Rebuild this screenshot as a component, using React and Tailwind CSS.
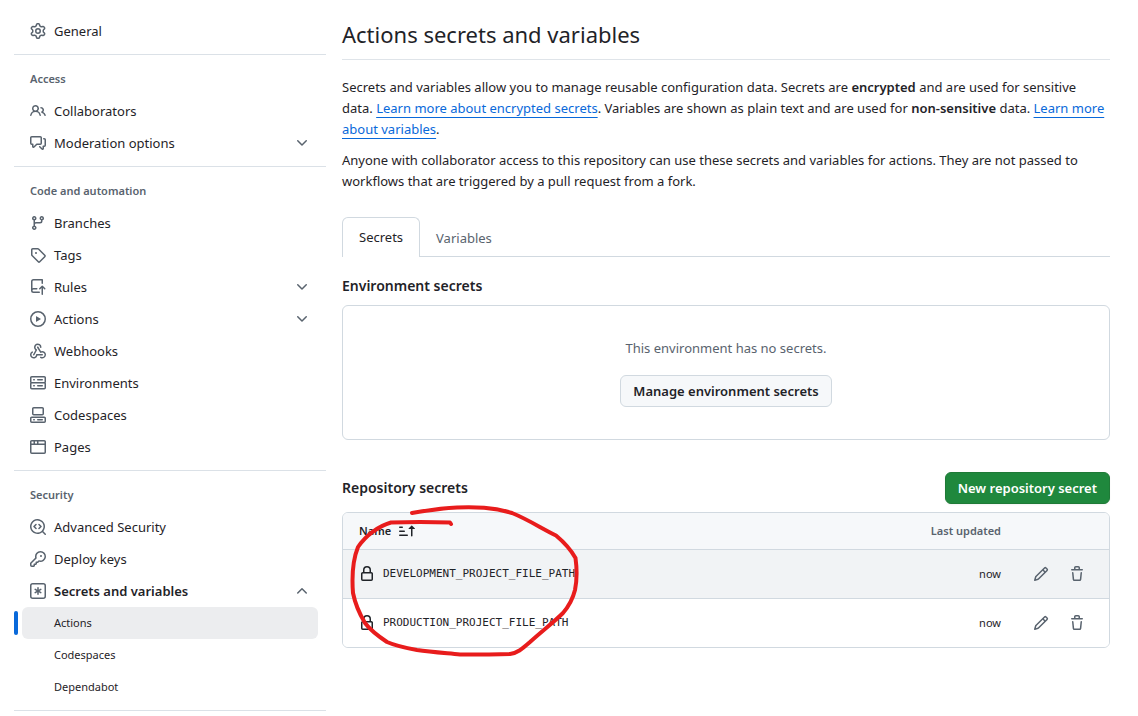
const ICONS = {
  gear: "M8 0a8.2 8.2 0 0 1 .701.031C9.444.095 9.99.645 10.16 1.29l.288 1.107c.018.066.079.158.212.224.231.114.454.243.668.386.123.082.233.09.299.071l1.103-.303c.644-.176 1.392.021 1.82.63.27.385.506.792.704 1.218.315.675.111 1.422-.364 1.891l-.814.806c-.049.048-.098.147-.088.294.016.257.016.515 0 .772-.01.147.038.246.088.294l.814.806c.475.469.679 1.216.364 1.891a7.977 7.977 0 0 1-.704 1.217c-.428.61-1.176.807-1.82.63l-1.102-.302c-.067-.019-.177-.011-.3.071a5.909 5.909 0 0 1-.668.386c-.133.066-.194.158-.211.224l-.29 1.106c-.168.646-.715 1.196-1.458 1.26a8.006 8.006 0 0 1-1.402 0c-.743-.064-1.289-.614-1.458-1.26l-.289-1.106c-.018-.066-.079-.158-.212-.224a5.738 5.738 0 0 1-.668-.386c-.123-.082-.233-.09-.299-.071l-1.103.303c-.644.176-1.392-.021-1.82-.63a8.12 8.12 0 0 1-.704-1.218c-.315-.675-.111-1.422.363-1.891l.815-.806c.05-.048.098-.147.088-.294a6.214 6.214 0 0 1 0-.772c.01-.147-.038-.246-.088-.294l-.815-.806C.635 6.045.431 5.298.746 4.623a7.92 7.92 0 0 1 .704-1.217c.428-.61 1.176-.807 1.82-.63l1.102.302c.067.019.177.011.3-.071.214-.143.437-.272.668-.386.133-.066.194-.158.211-.224l.29-1.106C6.009.645 6.556.095 7.299.03 7.53.01 7.764 0 8 0Zm-.571 1.525c-.036.003-.108.036-.137.146l-.289 1.105c-.147.561-.549.967-.998 1.189-.173.086-.34.183-.5.29-.417.278-.97.423-1.529.27l-1.103-.303c-.109-.03-.175.016-.195.045-.22.312-.412.644-.573.99-.014.031-.021.11.059.19l.815.806c.411.406.562.957.53 1.456a4.709 4.709 0 0 0 0 .582c.032.499-.119 1.05-.53 1.456l-.815.806c-.081.08-.073.159-.059.19.162.346.353.677.573.989.02.03.085.076.195.046l1.102-.303c.56-.153 1.113-.008 1.53.27.161.107.328.204.501.29.447.222.85.629.997 1.189l.289 1.105c.029.109.101.143.137.146a6.6 6.6 0 0 0 1.142 0c.036-.003.108-.036.137-.146l.289-1.105c.147-.561.549-.967.998-1.189.173-.086.34-.183.5-.29.417-.278.97-.423 1.529-.27l1.103.303c.109.029.175-.016.195-.045.22-.313.411-.644.573-.99.014-.031.021-.11-.059-.19l-.815-.806c-.411-.406-.562-.957-.53-1.456a4.709 4.709 0 0 0 0-.582c-.032-.499.119-1.05.53-1.456l.815-.806c.081-.08.073-.159.059-.19a6.464 6.464 0 0 0-.573-.989c-.02-.03-.085-.076-.195-.046l-1.102.303c-.56.153-1.113.008-1.53-.27a4.44 4.44 0 0 0-.501-.29c-.447-.222-.85-.629-.997-1.189l-.289-1.105c-.029-.11-.101-.143-.137-.146a6.6 6.6 0 0 0-1.142 0ZM11 8a3 3 0 1 1-6 0 3 3 0 0 1 6 0ZM9.5 8a1.5 1.5 0 1 0-3.001.001A1.5 1.5 0 0 0 9.5 8Z",
  people: "M2 5.5a3.5 3.5 0 1 1 5.898 2.549 5.508 5.508 0 0 1 3.034 4.084.75.75 0 1 1-1.482.235 4 4 0 0 0-7.9 0 .75.75 0 0 1-1.482-.236A5.507 5.507 0 0 1 3.102 8.05 3.493 3.493 0 0 1 2 5.5ZM11 4a3.001 3.001 0 0 1 2.22 5.018 5.01 5.01 0 0 1 2.56 3.012.749.749 0 0 1-.885.954.752.752 0 0 1-.549-.514 3.507 3.507 0 0 0-2.522-2.372.75.75 0 0 1-.574-.73v-.352a.75.75 0 0 1 .416-.672A1.5 1.5 0 0 0 11 5.5.75.75 0 0 1 11 4Zm-5.5-.5a2 2 0 1 0-.001 3.999A2 2 0 0 0 5.5 3.5Z",
  discussion: "M1.75 1h8.5c.966 0 1.75.784 1.75 1.75v5.5A1.75 1.75 0 0 1 10.25 10H7.061l-2.574 2.573A1.458 1.458 0 0 1 2 11.543V10h-.25A1.75 1.75 0 0 1 0 8.25v-5.5C0 1.784.784 1 1.75 1ZM1.5 2.75v5.5c0 .138.112.25.25.25h1a.75.75 0 0 1 .75.75v2.19l2.72-2.72a.749.749 0 0 1 .53-.22h3.5a.25.25 0 0 0 .25-.25v-5.5a.25.25 0 0 0-.25-.25h-8.5a.25.25 0 0 0-.25.25Zm13 2a.25.25 0 0 0-.25-.25h-.5a.75.75 0 0 1 0-1.5h.5c.966 0 1.75.784 1.75 1.75v5.5A1.75 1.75 0 0 1 14.25 12H14v1.543a1.458 1.458 0 0 1-2.487 1.03L9.22 12.28a.749.749 0 0 1 .326-1.275.749.749 0 0 1 .734.215l2.22 2.22v-2.19a.75.75 0 0 1 .75-.75h1a.25.25 0 0 0 .25-.25Z",
  branch: "M9.5 3.25a2.25 2.25 0 1 1 3 2.122V6A2.5 2.5 0 0 1 10 8.5H6a1 1 0 0 0-1 1v1.128a2.251 2.251 0 1 1-1.5 0V5.372a2.25 2.25 0 1 1 1.5 0v1.836A2.493 2.493 0 0 1 6 7h4a1 1 0 0 0 1-1v-.628A2.25 2.25 0 0 1 9.5 3.25Zm-6 0a.75.75 0 1 0 1.5 0 .75.75 0 0 0-1.5 0Zm8.25-.75a.75.75 0 1 0 0 1.5.75.75 0 0 0 0-1.5ZM4.25 12a.75.75 0 1 0 0 1.5.75.75 0 0 0 0-1.5Z",
  tag: "M1 7.775V2.75C1 1.784 1.784 1 2.75 1h5.025c.464 0 .91.184 1.238.513l6.25 6.25a1.75 1.75 0 0 1 0 2.474l-5.026 5.026a1.75 1.75 0 0 1-2.474 0l-6.25-6.25A1.752 1.752 0 0 1 1 7.775Zm1.5 0c0 .066.026.13.073.177l6.25 6.25a.25.25 0 0 0 .354 0l5.025-5.025a.25.25 0 0 0 0-.354l-6.25-6.25a.25.25 0 0 0-.177-.073H2.75a.25.25 0 0 0-.25.25ZM6 5a1 1 0 1 1 0 2 1 1 0 0 1 0-2Z",
  repoPush: "M1 2.5A2.5 2.5 0 0 1 3.5 0h8.75a.75.75 0 0 1 .75.75v3.5a.75.75 0 0 1-1.5 0V1.5h-8a1 1 0 0 0-1 1v6.708A2.493 2.493 0 0 1 3.5 9h3.25a.75.75 0 0 1 0 1.5H3.5a1 1 0 0 0 0 2h5.75a.75.75 0 0 1 0 1.5H3.5A2.5 2.5 0 0 1 1 11.5Zm13.23 7.79h-.001l-1.224-1.224v6.184a.75.75 0 0 1-1.5 0V9.066L10.28 10.29a.75.75 0 0 1-1.06-1.061l2.505-2.504a.75.75 0 0 1 1.06 0L15.29 9.23a.751.751 0 0 1-.018 1.042.751.751 0 0 1-1.042.018Z",
  play: "M8 0a8 8 0 1 1 0 16A8 8 0 0 1 8 0ZM1.5 8a6.5 6.5 0 1 0 13 0 6.5 6.5 0 0 0-13 0Zm4.879-2.773 4.264 2.559a.25.25 0 0 1 0 .428l-4.264 2.559A.25.25 0 0 1 6 10.559V5.442a.25.25 0 0 1 .379-.215Z",
  webhook: "M5.5 4.25a2.25 2.25 0 0 1 4.5 0 .75.75 0 0 0 1.5 0 3.75 3.75 0 1 0-6.14 2.889l-2.272 4.258a.75.75 0 0 0 1.324.706L7 7.25a.75.75 0 0 0-.309-1.015A2.25 2.25 0 0 1 5.5 4.25Z M7.364 3.607a.75.75 0 0 1 1.03.257l2.608 4.349a3.75 3.75 0 1 1-.628 6.785.75.75 0 0 1 .752-1.299 2.25 2.25 0 1 0-.033-3.88.75.75 0 0 1-1.03-.256L7.107 4.636a.75.75 0 0 1 .257-1.03Z M2.9 8.776A.75.75 0 0 1 2.625 9.8 2.25 2.25 0 1 0 6 11.75a.75.75 0 0 1 .75-.751h5.5a.75.75 0 0 1 0 1.5H7.425a3.751 3.751 0 1 1-5.55-3.998.75.75 0 0 1 1.024.274Z",
  server: "M1.75 1h12.5c.966 0 1.75.784 1.75 1.75v4c0 .372-.116.717-.314 1 .198.283.314.628.314 1v4a1.75 1.75 0 0 1-1.75 1.75H1.75A1.75 1.75 0 0 1 0 12.75v-4c0-.358.109-.707.314-1a1.739 1.739 0 0 1-.314-1v-4C0 1.784.784 1 1.75 1ZM1.5 2.75v4c0 .138.112.25.25.25h12.5a.25.25 0 0 0 .25-.25v-4a.25.25 0 0 0-.25-.25H1.75a.25.25 0 0 0-.25.25Zm.25 5.75a.25.25 0 0 0-.25.25v4c0 .138.112.25.25.25h12.5a.25.25 0 0 0 .25-.25v-4a.25.25 0 0 0-.25-.25ZM7 4.75A.75.75 0 0 1 7.75 4h4.5a.75.75 0 0 1 0 1.5h-4.5A.75.75 0 0 1 7 4.75ZM7.75 10h4.5a.75.75 0 0 1 0 1.5h-4.5a.75.75 0 0 1 0-1.5ZM3 4.75A.75.75 0 0 1 3.75 4h.5a.75.75 0 0 1 0 1.5h-.5A.75.75 0 0 1 3 4.75ZM3.75 10h.5a.75.75 0 0 1 0 1.5h-.5a.75.75 0 0 1 0-1.5Z",
  codespaces: "M0 11.25c0-.966.784-1.75 1.75-1.75h12.5c.966 0 1.75.784 1.75 1.75v3A1.75 1.75 0 0 1 14.25 16H1.75A1.75 1.75 0 0 1 0 14.25Zm2-9.5C2 .784 2.784 0 3.75 0h8.5C13.216 0 14 .784 14 1.75v5a1.75 1.75 0 0 1-1.75 1.75h-8.5A1.75 1.75 0 0 1 2 6.75Zm1.75-.25a.25.25 0 0 0-.25.25v5c0 .138.112.25.25.25h8.5a.25.25 0 0 0 .25-.25v-5a.25.25 0 0 0-.25-.25Zm-2 9.5a.25.25 0 0 0-.25.25v3c0 .138.112.25.25.25h12.5a.25.25 0 0 0 .25-.25v-3a.25.25 0 0 0-.25-.25ZM7 12.75a.75.75 0 0 1 .75-.75h4.5a.75.75 0 0 1 0 1.5h-4.5a.75.75 0 0 1-.75-.75Zm-4 0a.75.75 0 0 1 .75-.75h.5a.75.75 0 0 1 0 1.5h-.5a.75.75 0 0 1-.75-.75Z",
  browser: "M0 2.75C0 1.784.784 1 1.75 1h12.5c.966 0 1.75.784 1.75 1.75v10.5A1.75 1.75 0 0 1 14.25 15H1.75A1.75 1.75 0 0 1 0 13.25ZM14.5 6h-13v7.25c0 .138.112.25.25.25h12.5a.25.25 0 0 0 .25-.25Zm-6-3.5v2h6V2.75a.25.25 0 0 0-.25-.25ZM5 2.5v2h2v-2Zm-3.25 0a.25.25 0 0 0-.25.25V4.5h2v-2Z",
  codescan: "M8.47 4.97a.75.75 0 0 0 0 1.06L9.94 7.5 8.47 8.97a.75.75 0 1 0 1.06 1.06l2-2a.75.75 0 0 0 0-1.06l-2-2a.75.75 0 0 0-1.06 0ZM6.53 6.03a.75.75 0 0 0-1.06-1.06l-2 2a.75.75 0 0 0 0 1.06l2 2a.75.75 0 1 0 1.06-1.06L5.06 7.5l1.47-1.47ZM12.246 13.307a7.501 7.501 0 1 1 1.06-1.06l2.474 2.473a.749.749 0 0 1-.326 1.275.749.749 0 0 1-.734-.215ZM1.5 7.5a6.002 6.002 0 0 0 3.608 5.504 6.002 6.002 0 0 0 6.486-1.117.748.748 0 0 1 .292-.293A6 6 0 1 0 1.5 7.5Z",
  key: "M10.5 0a5.499 5.499 0 1 1-1.288 10.848l-.932.932a.749.749 0 0 1-.53.22H7v.75a.749.749 0 0 1-.22.53l-.5.5a.749.749 0 0 1-.53.22H5v.75a.749.749 0 0 1-.22.53l-.5.5a.749.749 0 0 1-.53.22h-2A1.75 1.75 0 0 1 0 14.25v-2c0-.199.079-.389.22-.53l4.932-4.932A5.5 5.5 0 0 1 10.5 0Zm-4 5.5c-.001.431.069.86.205 1.269a.75.75 0 0 1-.181.768L1.5 12.56v1.69c0 .138.112.25.25.25h1.69l.06-.06v-1.19a.75.75 0 0 1 .75-.75h1.19l.06-.06v-1.19a.75.75 0 0 1 .75-.75h1.19l1.023-1.025a.75.75 0 0 1 .768-.18A4 4 0 1 0 6.5 5.5ZM11 6a1 1 0 1 1 0-2 1 1 0 0 1 0 2Z",
  keyAsterisk: "M0 2.75A2.75 2.75 0 0 1 2.75 0h10.5A2.75 2.75 0 0 1 16 2.75v10.5A2.75 2.75 0 0 1 13.25 16H2.75A2.75 2.75 0 0 1 0 13.25ZM2.75 1.5c-.69 0-1.25.56-1.25 1.25v10.5c0 .69.56 1.25 1.25 1.25h10.5c.69 0 1.25-.56 1.25-1.25V2.75c0-.69-.56-1.25-1.25-1.25ZM8 4a.75.75 0 0 1 .75.75V6.7l1.69-.975a.75.75 0 0 1 .75 1.3L9.5 8l1.69.976a.75.75 0 0 1-.75 1.298L8.75 9.3v1.951a.75.75 0 0 1-1.5 0V9.299l-1.69.976a.75.75 0 0 1-.75-1.3L6.5 8l-1.69-.975a.75.75 0 0 1 .75-1.3l1.69.976V4.75A.75.75 0 0 1 8 4Z",
  chevronDown: "M12.78 5.22a.749.749 0 0 1 0 1.06l-4.25 4.25a.749.749 0 0 1-1.06 0L3.22 6.28a.749.749 0 1 1 1.06-1.06L8 8.939l3.72-3.719a.749.749 0 0 1 1.06 0Z",
  chevronUp: "M3.22 10.53a.749.749 0 0 1 0-1.06l4.25-4.25a.749.749 0 0 1 1.06 0l4.25 4.25a.749.749 0 1 1-1.06 1.06L8 6.811 4.28 10.53a.749.749 0 0 1-1.06 0Z",
  lock: "M4 4a4 4 0 0 1 8 0v2h.25c.966 0 1.75.784 1.75 1.75v5.5A1.75 1.75 0 0 1 12.25 15h-8.5A1.75 1.75 0 0 1 2 13.25v-5.5C2 6.784 2.784 6 3.75 6H4Zm8.25 3.5h-8.5a.25.25 0 0 0-.25.25v5.5c0 .138.112.25.25.25h8.5a.25.25 0 0 0 .25-.25v-5.5a.25.25 0 0 0-.25-.25ZM10.5 6V4a2.5 2.5 0 1 0-5 0v2Z",
  pencil: "M11.013 1.427a1.75 1.75 0 0 1 2.474 0l1.086 1.086a1.75 1.75 0 0 1 0 2.474l-8.61 8.61c-.21.21-.47.364-.756.445l-3.251.93a.75.75 0 0 1-.927-.928l.929-3.25c.081-.286.235-.547.445-.758l8.61-8.61Zm.176 4.823L9.75 4.81l-6.286 6.287a.253.253 0 0 0-.064.108l-.558 1.953 1.953-.558a.253.253 0 0 0 .108-.064Zm1.238-3.763a.25.25 0 0 0-.354 0L10.811 3.75l1.439 1.44 1.263-1.263a.25.25 0 0 0 0-.354Z",
  trash: "M11 1.75V3h2.25a.75.75 0 0 1 0 1.5H2.75a.75.75 0 0 1 0-1.5H5V1.75C5 .784 5.784 0 6.75 0h2.5C10.216 0 11 .784 11 1.75ZM4.496 6.675l.66 6.6a.25.25 0 0 0 .249.225h5.19a.25.25 0 0 0 .249-.225l.66-6.6a.75.75 0 0 1 1.492.149l-.66 6.6A1.748 1.748 0 0 1 10.595 15h-5.19a1.75 1.75 0 0 1-1.741-1.575l-.66-6.6a.75.75 0 1 1 1.492-.15ZM6.5 1.75V3h3V1.75a.25.25 0 0 0-.25-.25h-2.5a.25.25 0 0 0-.25.25Z",
  sortAsc: "m12.927 2.573 3 3A.25.25 0 0 1 15.75 6H13.5v6.75a.75.75 0 0 1-1.5 0V6H9.75a.25.25 0 0 1-.177-.427l3-3a.25.25 0 0 1 .354 0ZM0 12.25a.75.75 0 0 1 .75-.75h7.5a.75.75 0 0 1 0 1.5H.75a.75.75 0 0 1-.75-.75Zm0-4a.75.75 0 0 1 .75-.75h4.5a.75.75 0 0 1 0 1.5H.75a.75.75 0 0 1-.75-.75Zm0-4a.75.75 0 0 1 .75-.75h2.5a.75.75 0 0 1 0 1.5H.75a.75.75 0 0 1-.75-.75Z",
};

function Icon({ name, className = "text-[#59636e]" }) {
  return (
    <svg viewBox="0 0 16 16" aria-hidden="true" fill="currentColor" className={`size-4 shrink-0 ${className}`}>
      <path d={ICONS[name]} />
    </svg>
  );
}

const SECTIONS = [
  {
    title: "Access",
    items: [
      { label: "Collaborators", icon: "people" },
      { label: "Moderation options", icon: "discussion", expandable: true },
    ],
  },
  {
    title: "Code and automation",
    items: [
      { label: "Branches", icon: "branch" },
      { label: "Tags", icon: "tag" },
      { label: "Rules", icon: "repoPush", expandable: true },
      { label: "Actions", icon: "play", expandable: true },
      { label: "Webhooks", icon: "webhook" },
      { label: "Environments", icon: "server" },
      { label: "Codespaces", icon: "codespaces" },
      { label: "Pages", icon: "browser" },
    ],
  },
  {
    title: "Security",
    items: [
      { label: "Advanced Security", icon: "codescan" },
      { label: "Deploy keys", icon: "key" },
      {
        label: "Secrets and variables",
        icon: "keyAsterisk",
        expandable: true,
        children: ["Actions", "Codespaces", "Dependabot"],
      },
    ],
  },
];

const SECRETS = ["DEVELOPMENT_PROJECT_FILE_PATH", "PRODUCTION_PROJECT_FILE_PATH"];

function NavItem({ item }) {
  const open = Boolean(item.children);
  const row = "flex h-8 w-full items-center gap-2 rounded-md px-2 text-left";
  if (!item.expandable) {
    return (
      <li className="px-2">
        <a href="#" className={row}>
          <Icon name={item.icon} />
          <span>{item.label}</span>
        </a>
      </li>
    );
  }
  return (
    <li>
      <div className="px-2">
        <button type="button" aria-expanded={open} className={row}>
          <Icon name={item.icon} />
          <span className={open ? "grow font-semibold" : "grow"}>{item.label}</span>
          <Icon name={open ? "chevronUp" : "chevronDown"} />
        </button>
      </div>
      {open && (
        <ul className="text-[11px] leading-4">
          {item.children.map((child, i) => (
            <li key={child} className="relative px-2">
              {i === 0 && <span className="absolute left-0 top-1 h-6 w-1 rounded-md bg-[#0969da]" />}
              <a
                href="#"
                aria-current={i === 0 ? "page" : undefined}
                className={`flex h-8 items-center rounded-md pl-8 ${i === 0 ? "bg-[#ecedef]" : ""}`}
              >
                {child}
              </a>
            </li>
          ))}
        </ul>
      )}
    </li>
  );
}

function Divider() {
  return <div className="mt-[7px] mb-2 h-px bg-[#dbe1e7]" />;
}

function Sidebar() {
  return (
    <nav aria-label="Settings" className="w-[312px] shrink-0 pt-[15px]">
      <ul>
        <NavItem item={{ label: "General", icon: "gear" }} />
      </ul>
      <Divider />
      {SECTIONS.map((section) => (
        <section key={section.title}>
          <h2 className="flex h-8 items-center px-4 text-[11px] leading-4 font-semibold text-[#59636e]">{section.title}</h2>
          <ul>
            {section.items.map((item) => (
              <NavItem key={item.label} item={item} />
            ))}
          </ul>
          <Divider />
        </section>
      ))}
    </nav>
  );
}

function TextLink({ children }) {
  return (
    <a href="#" className="text-[#0969da] underline underline-offset-4">
      {children}
    </a>
  );
}

function SecretsTable() {
  return (
    <div className="relative mt-2">
      <div className="overflow-hidden rounded-md border border-[#d1d9e0]">
        <table className="w-full border-collapse text-[11px]">
          <thead>
            <tr className="h-9 bg-[#f6f8fa]">
              <th scope="col" className="pl-4 text-left font-semibold">
                <button type="button" className="flex items-center gap-2">
                  Name
                  <Icon name="sortAsc" className="text-[#1f2328]" />
                </button>
              </th>
              <th scope="col" className="w-32 text-right font-semibold text-[#59636e]">Last updated</th>
              <th scope="col" aria-label="Actions" className="w-[108px]" />
            </tr>
          </thead>
          <tbody>
            {SECRETS.map((name, i) => (
              <tr key={name} className={`h-[49px] border-t border-[#d1d9e0] ${i === 0 ? "bg-[#f1f3f5]" : "bg-white"}`}>
                <td className="pl-4">
                  <div className="flex items-center gap-2">
                    <Icon name="lock" className="text-[#1f2328]" />
                    <code className="font-['DejaVu_Sans_Mono',monospace] text-[11px]">{name}</code>
                  </div>
                </td>
                <td className="text-right">now</td>
                <td>
                  <div className="flex justify-end gap-5 pr-6">
                    <button type="button" aria-label={`Edit ${name}`}>
                      <Icon name="pencil" />
                    </button>
                    <button type="button" aria-label={`Delete ${name}`}>
                      <Icon name="trash" />
                    </button>
                  </div>
                </td>
              </tr>
            ))}
          </tbody>
        </table>
      </div>
      {/* Hand-drawn loop over the secret names */}
      <svg
        viewBox="342 502 240 160"
        aria-hidden="true"
        className="pointer-events-none absolute left-0 -top-[10px] h-[160px] w-[240px]"
        fill="none"
        stroke="#e81c1c"
        strokeWidth="4"
        strokeLinecap="round"
        strokeLinejoin="round"
      >
        <path d="M412 513C430 510 443 508 457 507.500C475 507 493 507 512 513C527 519 541 528 556 535.500C565 543 571 550 575.500 558C577 569 577 580 575 590C573 598 569 606 563 613C554 622 542 631 530 642C523 648 518 653 510 654C493 654.500 477 654.500 460 654.500C445 653 431 652 417 650C406 648 396 646 387 642C378 636 371 631 365 623C359 613 355 603 353 593C352 580 352 562 358 547C366 535 379 526 391 522.500C410 522 430 522 450 522.500L451 524" />
      </svg>
    </div>
  );
}

export default function App() {
  return (
    <div className="flex gap-4 bg-white pr-7 pl-[14px] font-['Noto_Sans','Open_Sans',sans-serif] text-[13px] leading-[21px] text-[#1f2328]">
      <Sidebar />
      <main className="min-w-0 flex-1 pt-[15px]">
        <h1 className="h-[45px] border-b border-[#d1d9e0b3] text-[22px] leading-[38px]">Actions secrets and variables</h1>
        <p className="mt-[17px]">
          Secrets and variables allow you to manage reusable configuration data. Secrets are{" "}
          <strong className="font-semibold">encrypted</strong> and are used for sensitive data.{" "}
          <TextLink>Learn more about encrypted secrets</TextLink>. Variables are shown as plain text and are used for{" "}
          <strong className="font-semibold">non-sensitive</strong> data. <TextLink>Learn more about variables</TextLink>.
        </p>
        <p className="mt-[10px]">
          Anyone with collaborator access to this repository can use these secrets and variables for actions. They are
          not passed to workflows that are triggered by a pull request from a fork.
        </p>

        <div role="tablist" className="mt-[25px] flex h-10 border-b border-[#d1d9e0]">
          <button
            type="button"
            role="tab"
            aria-selected="true"
            className="-mb-px rounded-t-md border border-b-0 border-[#d1d9e0] bg-white px-4"
          >
            Secrets
          </button>
          <button type="button" role="tab" aria-selected="false" className="px-4 pt-1 text-[#59636e]">
            Variables
          </button>
        </div>

        <h2 className="mt-[17px] text-sm leading-6 font-semibold">Environment secrets</h2>
        <div className="mt-[7px] flex flex-col items-center gap-4 rounded-md border border-[#d1d9e0] pt-8 pb-8">
          <p className="text-[#59636e]">This environment has no secrets.</p>
          <button
            type="button"
            className="h-8 rounded-md border border-[#d1d9e0] bg-[#f6f8fa] px-3 font-semibold"
          >
            Manage environment secrets
          </button>
        </div>

        <div className="mt-8 flex items-center justify-between">
          <h2 className="text-sm font-semibold">Repository secrets</h2>
          <button
            type="button"
            className="h-8 rounded-md border border-[#1f7a37] bg-[#1f883d] px-3 font-semibold text-white shadow-xs"
          >
            New repository secret
          </button>
        </div>
        <SecretsTable />
      </main>
    </div>
  );
}
